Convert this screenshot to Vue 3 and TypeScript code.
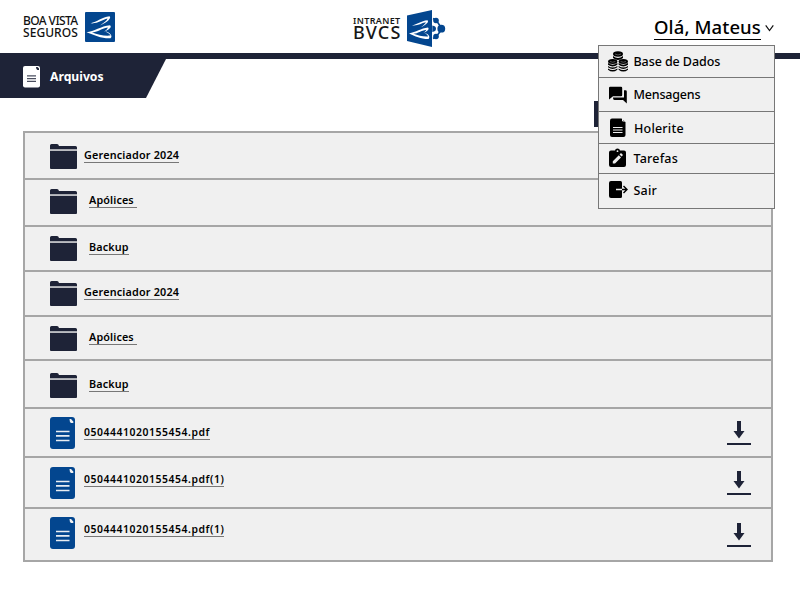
<script setup lang="ts">
interface Entry {
  name: string
  kind: 'folder' | 'file'
  size: string
}
interface MenuItem {
  label: string
  icon: 'db' | 'chat' | 'doc' | 'task' | 'exit'
}
const entries: Entry[] = [
  { name: 'Gerenciador 2024', kind: 'folder', size: 'long' },
  { name: 'Apólices\u00a0', kind: 'folder', size: 'short' },
  { name: 'Backup', kind: 'folder', size: 'short' },
  { name: 'Gerenciador 2024', kind: 'folder', size: 'long' },
  { name: 'Apólices\u00a0', kind: 'folder', size: 'short' },
  { name: 'Backup', kind: 'folder', size: 'short' },
  { name: '0504441020155454.pdf', kind: 'file', size: 'pdf' },
  { name: '0504441020155454.pdf(1)', kind: 'file', size: 'pdf' },
  { name: '0504441020155454.pdf(1)', kind: 'file', size: 'pdf' },
]
const menu: MenuItem[] = [
  { label: 'Base de Dados', icon: 'db' },
  { label: 'Mensagens', icon: 'chat' },
  { label: 'Holerite', icon: 'doc' },
  { label: 'Tarefas', icon: 'task' },
  { label: 'Sair', icon: 'exit' },
]
</script>

<template>
  <div class="page">
    <header class="header">
      <div class="brand">
        <div class="brand-name"><span class="boa">BOA VISTA</span><span class="seg">SEGUROS</span></div>
        <svg class="brand-mark" width="30" height="30" viewBox="0 0 30 30">
          <rect width="30" height="30" rx="1" fill="#03468f" />
          <g fill="#fff">
            <path d="M5.500 11.300C12 10 17 5 24.500 4.300C27 6 22 10.500 15 13.600C19.500 10.500 22 8.300 22.500 6.600C17 7.800 13 12 5.500 11.300Z" />
            <path d="M1.500 20.200C9 19.500 16 14 25 13.200C27.500 15 23.500 18 19 19.800C21.500 17.700 22.500 16.800 22.800 15.400C16 16.500 12 20.300 7 20.500C13 22.500 19 24.300 25.500 23.600C25.500 22 22 20.500 20 19.200C25.500 20.500 28 24 25.500 26.300C17 26.800 9 23 1.500 20.200Z" />
          </g>
        </svg>
      </div>
      <div class="intranet">
        <div class="intra-name"><span class="intra">INTRANET</span><span class="bvcs">BVCS</span></div>
        <svg class="intra-mark" width="39" height="38" viewBox="0 0 39 38">
          <path d="M0 5.500L25 0V37L0 31Z" fill="#03468f" />
          <g fill="#fff">
            <path d="M5 15.300C10 14.500 14 10.800 20.500 10.200C22.500 12 18.500 15 14 17.200C17 15 18.500 13.500 18.800 12.300C14 13.300 10.500 16.200 5 15.300Z" />
            <path d="M2 23.400C9 22.500 14 18.300 21 17.600C23 19.500 19.500 21.800 16 23.300C18 21.700 19 20.800 19.300 19.700C14 20.500 11 23.500 6.500 23.700C11 25.400 16 26.800 21 26.500C21 25 19 23.800 17.500 22.900C22 23.800 23.500 27 21.500 29C14.500 29.200 8 26 2 23.400Z" />
          </g>
          <g fill="#03468f">
            <path d="M29 10L33.500 16.500M29 27L33.500 21M26 8.500L29 10M26 28.500L29 27" fill="none" stroke="#03468f" stroke-width="1.600" />
            <circle cx="29" cy="10.500" r="2.800" />
            <circle cx="29" cy="26.500" r="2.800" />
            <circle cx="34.300" cy="18.700" r="3.900" />
            <path d="M25.300 15.500Q29 16 29 18.700T25.300 22Z" />
          </g>
        </svg>
      </div>
      <div class="user">
        <span class="hello">Olá, Mateus</span>
        <svg class="chevron" width="10" height="8" viewBox="0 0 10 8"><path d="M.700 1.300L4.500 6.500L8.300 1.300" fill="none" stroke="#111" stroke-width="1.200" /></svg>
      </div>
      <nav class="menu">
        <a v-for="item in menu" :key="item.label" class="menu-item" :class="item.icon">
          <svg v-if="item.icon === 'db'" class="menu-icon" width="20" height="21" viewBox="0 0 20 21">
            <g><ellipse cx="10" cy="3" rx="5" ry="2.800" /><path d="M5 5Q10 9 15 5V7Q10 11 5 7Z" />
              <g v-for="x in [0, 10.6]" :key="x" :transform="`translate(${x} 0)`">
                <ellipse cx="4.700" cy="10.500" rx="4.700" ry="2.500" />
                <path d="M0 12Q4.700 15.500 9.400 12V13.800Q4.700 17.200 0 13.800ZM0 14.900Q4.700 18.300 9.400 14.900V16.300Q4.700 19.700 0 16.300ZM0 17.400Q4.700 20.800 9.400 17.400V18.700Q4.700 22.500 0 18.700Z" />
              </g>
            </g>
            <path d="M7 3Q10 5 13 3M2 10.500Q4.700 12 7.400 10.500M12.600 10.500Q15.300 12 18 10.500" fill="none" stroke="#888" stroke-width=".6" />
          </svg>
          <svg v-else-if="item.icon === 'chat'" class="menu-icon" width="20" height="18" viewBox="0 0 20 18">
            <path d="M1 2Q1 .8 2.200.8H13Q14.200.8 14.200 2V9Q14.200 10.200 13 10.200H5L1 13.500Z" /><path d="M16 4.200H17.500Q18.800 4.200 18.800 5.500V17.600L15 14H6.500Q5 14 5 12V11.600H16Z" />
          </svg>
          <svg v-else-if="item.icon === 'doc'" class="menu-icon" width="20" height="20" viewBox="0 0 20 20">
            <path d="M4 .5H13.500L17.500 4V17Q17.500 19 15.500 19H4Q2 19 2 17V2.500Q2 .5 4 .5Z" /><path d="M14.500 0V3H18M5 9.500H14.500M5 12H14.500M5 14.500H14.500" stroke="#eee" fill="none" />
          </svg>
          <svg v-else-if="item.icon === 'task'" class="menu-icon" width="20" height="20" viewBox="0 0 20 20">
            <path d="M3 2.500H7Q7.300.5 9.500.5T12 2.500H16Q18 2.500 18 4.500V17Q18 19 16 19H3Q1 19 1 17V4.500Q1 2.500 3 2.500Z" /><circle cx="9.500" cy="3.200" r=".9" fill="#eee" /><path d="M4.800 15.500V13.300L10.800 7.300L13 9.500L7 15.500ZM11.500 6.500L13 5L15 7L13.600 8.600Z" fill="#eee" />
          </svg>
          <svg v-else class="menu-icon" width="20" height="19" viewBox="0 0 20 19">
            <path d="M3 1H12.500Q14 1 14 2.500V16.500Q14 18 12.500 18H3Q1 18 1 16V3Q1 1 3 1Z" /><path d="M8 9.500H14" stroke="#eee" stroke-width="1.500" /><path d="M14 9.500H19M15.500 6L19 9.500L15.500 13" fill="none" stroke="#000" stroke-width="1.400" />
          </svg>
          <span class="menu-label">{{ item.label }}</span>
        </a>
      </nav>
    </header>

    <div class="titlebar">
      <h1 class="tab">
        <svg width="17" height="22" viewBox="0 0 17 22"><rect width="17" height="21.500" rx="2" fill="#fff" /><path d="M13 1H14.500L16 2.500V4H14.500Q13 3.500 13 1Z" fill="#1e2337" /><path d="M4 9.800H13M4 12.600H13M4 15.400H13" stroke="#4b4f60" stroke-width="1.200" /></svg>
        <span>Arquivos</span>
      </h1>
    </div>
    <div class="toolbar"><button class="action" type="button" /></div>

    <main class="list">
      <div v-for="(entry, i) in entries" :key="i" class="row" :class="`r${i + 1}`">
        <svg v-if="entry.kind === 'folder'" class="icon" width="27" height="25" viewBox="0 0 27 25">
          <path d="M0 5V1.500Q0 0 1.500 0H7Q8.500 0 9 2H25.500Q27 2 27 3.500V5Z" fill="#1e2337" /><path d="M0 6.700H27V24Q27 25 26 25H1Q0 25 0 24Z" fill="#1e2337" /><path d="M0 5H27V5.600H0Z" fill="#7a7e88" />
        </svg>
        <svg v-else class="icon" width="25" height="32" viewBox="0 0 25 32">
          <rect width="25" height="32" rx="3" fill="#03468f" /><path d="M19.500 2H21L23.300 4.500V6H21Q19.500 5 19.500 2Z" fill="#f0f0f0" /><path d="M6 14.500H19.500M6 18.800H19.500M6 23.500H19.500" stroke="#e9edf2" stroke-width="1.700" />
        </svg>
        <a class="name" :class="entry.size">{{ entry.name }}</a>
        <svg v-if="entry.kind === 'file'" class="download" width="24" height="24" viewBox="0 0 24 24"><path d="M10 0H14V10H17.500L12 17.500L6.500 10H10ZM0 22H24V24H0Z" fill="#1e2337" /></svg>
      </div>
    </main>
  </div>
</template>

<style>
body {
  background: #fff;
}
</style>

<style scoped>
.page {
  width: 800px;
  height: 600px;
  overflow: hidden;
  box-sizing: border-box;
  font-family: "Noto Sans", "Open Sans", sans-serif;
  color: #000;
}
.header {
  position: relative;
  display: flex;
  align-items: flex-start;
  height: 53px;
  border-bottom: 6px solid #1e2337;
}
.brand {
  display: flex;
  margin-left: 23px;
  width: 330px;
}
.brand-name {
  display: flex;
  flex-direction: column;
  width: 62px;
  padding-top: 15px;
  font: 500 12px/12px "Noto Sans", sans-serif;
  color: #111;
  white-space: nowrap;
}
.boa { letter-spacing: -0.6px; }
.seg { letter-spacing: 0.05px; }
.brand-mark { margin-top: 12px; }
.intranet {
  display: flex;
  width: 302px;
}
.intra-name {
  display: flex;
  flex-direction: column;
  width: 54px;
  padding-top: 15px;
  color: #161616;
}
.intra { font: 600 9px/12px "Noto Sans", sans-serif; letter-spacing: 0.35px; }
.bvcs { font: 500 18px/11px "Noto Sans", sans-serif; letter-spacing: 1.1px; }
.intra-mark { margin-top: 10px; }
.user {
  display: flex;
  align-items: flex-start;
}
.hello {
  box-sizing: border-box;
  width: 107px;
  height: 40px;
  margin-left: -1px;
  padding-top: 14px;
  border-bottom: 1px solid #000;
  font-size: 18.5px;
  font-weight: 500;
  letter-spacing: 0.1px;
  line-height: 26px;
  white-space: nowrap;
}
.chevron { margin: 24px 0 0 4px; }
.menu {
  position: absolute;
  left: 598px;
  top: 45px;
  z-index: 2;
  display: grid;
  grid-template-rows: 32px 34px 32px 30px 34px;
  width: 175px;
  border: 1px solid #777;
  background: #f0f0f0;
}
.menu-item {
  display: flex;
  align-items: flex-start;
  gap: 5.5px;
  padding-left: 9px;
  border-bottom: 1px solid #777;
}
.menu-item:last-child { border-bottom: 0; }
.menu-label {
  font-size: 12.5px;
  font-weight: 500;
  line-height: 19px;
  letter-spacing: -0.08px;
  margin-top: 6px;
  white-space: nowrap;
}
.menu-icon { margin-top: 5px; }
.chat .menu-icon { margin-top: 8px; }
.chat .menu-label { margin-top: 7px; letter-spacing: -0.2px; }
.doc .menu-icon { margin-top: 6px; }
.doc .menu-label { margin: 7px 0 0 0.5px; letter-spacing: 0.2px; }
.task .menu-icon { margin-top: 4px; }
.task .menu-label { margin-top: 5px; letter-spacing: 0.2px; }
.exit .menu-icon { margin-top: 6px; }
.exit .menu-label { margin-top: 7px; letter-spacing: 0.2px; }
.titlebar { height: 39px; }
.tab {
  display: flex;
  align-items: flex-start;
  gap: 10px;
  box-sizing: border-box;
  width: 166px;
  height: 39px;
  margin: 0;
  padding: 7px 0 0 23px;
  background: #1e2337;
  clip-path: polygon(0 0, 166px 0, 146px 39px, 0 39px);
  color: #fff;
  font-size: 12.2px;
  font-weight: 700;
  line-height: 21px;
}
.toolbar {
  display: flex;
  height: 33px;
  padding: 3px 0 0 594px;
  box-sizing: border-box;
}
.action {
  width: 130px;
  height: 26px;
  padding: 0;
  border: 0;
  background: #1e2337;
}
.list {
  display: grid;
  grid-template-rows: 47px 47px 45px 45px 44px 48px 49px 51px 53px;
  width: 746px;
  margin-left: 23px;
  border: 2px solid #a6a6a6;
  border-bottom: 0;
  background: #f0f0f0;
}
.row {
  display: flex;
  align-items: flex-start;
  padding: 9px 20px 0 25px;
  border-bottom: 2px solid #a6a6a6;
}
.name {
  box-sizing: border-box;
  height: 16px;
  border-bottom: 1px solid #777;
  font-size: 10.8px;
  font-weight: 600;
  line-height: 16px;
  letter-spacing: 0.18px;
  margin: 3px 0 0 7px;
  white-space: nowrap;
}
.name.short { margin-left: 12px; letter-spacing: 0.12px; }
.name.pdf { margin: 4px 0 0 9px; font-size: 10.4px; letter-spacing: 0.56px; }
.download { margin: 4px 0 0 auto; }
.r1 { padding-top: 11px; }
.r6 { padding-top: 12px; }
.r7 { padding-top: 8px; }
.r7 .name.pdf { margin-top: 7px; }
.r9 { padding-top: 8px; }
.r9 .download { margin-top: 6px; }
</style>
